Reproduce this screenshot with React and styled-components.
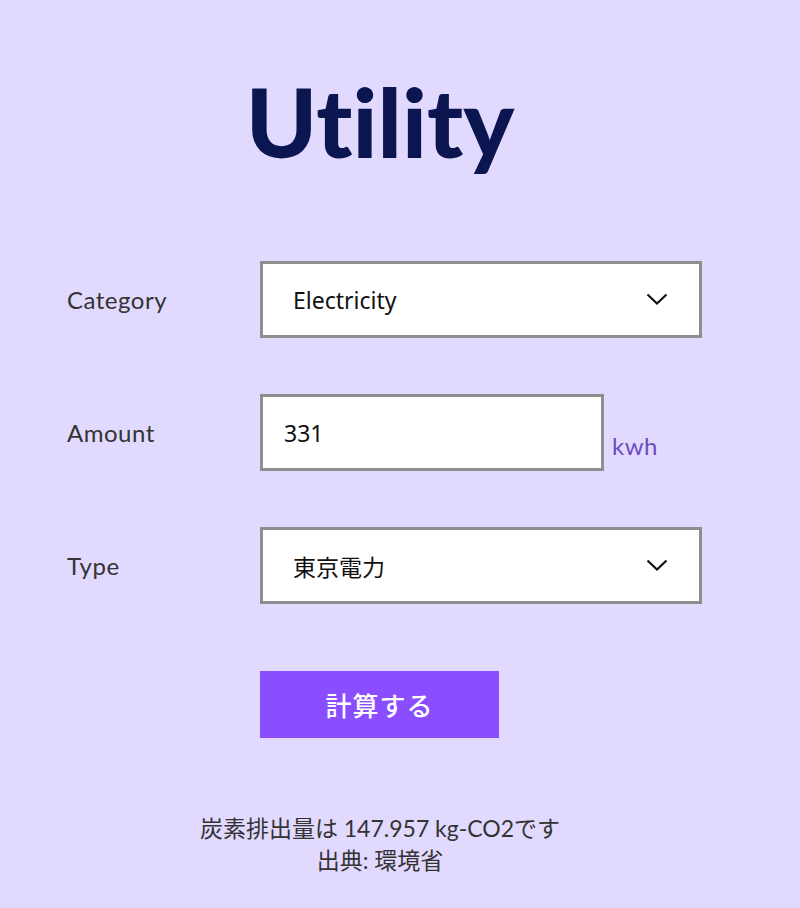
import React from "react";
import styled, { createGlobalStyle } from "styled-components";

const Global = createGlobalStyle`
  html, body { margin: 0; padding: 0; background: #e2d9fe; }
  body { font-family: Lato, "Noto Sans CJK JP", sans-serif; }
`;

const Page = styled.div`
  width: 760px;
  min-height: 908px;
  box-sizing: border-box;
  padding-top: 59px;
`;

const Title = styled.h1`
  margin: 0;
  text-align: center;
  font-family: Lato, sans-serif;
  font-weight: 900;
  font-size: 96px;
  line-height: 124px;
  color: #0b1550;
  letter-spacing: 0px;
  font-variant-ligatures: none;
  font-feature-settings: "liga" 0, "dlig" 0;
`;

const Form = styled.div`
  margin-top: 78px;
  padding-left: 67px;
  display: flex;
  flex-direction: column;
  gap: 56px;
`;

const Row = styled.div`
  display: grid;
  grid-template-columns: 193px auto;
  align-items: center;
`;

const Label = styled.div`
  font-family: Lato, sans-serif;
  font-size: 24px;
  letter-spacing: 0.5px;
  color: #333;
`;

const FieldWrap = styled.div`
  display: flex;
  align-items: flex-end;
  gap: 8px;
`;

const Box = styled.div`
  box-sizing: border-box;
  width: ${(p) => p.$w}px;
  height: 77px;
  border: 3px solid #8e8e8e;
  background: #fff;
  display: flex;
  align-items: center;
  justify-content: space-between;
  padding: 0 31px 0 ${(p) => p.$pl}px;
  font-family: "Noto Sans", "Noto Sans CJK JP", sans-serif;
  font-size: 23px;
  color: #111;
`;

const Unit = styled.span`
  font-family: Lato, sans-serif;
  font-size: 24px;
  letter-spacing: 0.5px;
  color: #6a4bc0;
  margin-bottom: 11px;
`;

const Chevron = () => (
  <svg width="22" height="13" viewBox="0 0 22 13">
    <polyline points="1.5,1.5 11,10.5 20.5,1.5" fill="none" stroke="#111" strokeWidth="2.2" />
  </svg>
);

const ButtonRow = styled.div`
  margin-top: 67px;
  padding-left: 260px;
`;

const Button = styled.button`
  width: 239px;
  height: 67px;
  border: none;
  background: #8a4dff;
  color: #fff;
  font-family: "Noto Sans CJK JP", sans-serif;
  font-size: 26px;
  font-weight: 500;
  cursor: pointer;
  letter-spacing: 1px;
`;

const Result = styled.div`
  margin-top: 74px;
  text-align: center;
  font-family: Lato, "Noto Sans CJK JP", sans-serif;
  font-size: 23px;
  line-height: 32px;
  color: #333;
`;

export default function App() {
  return (
    <>
      <Global />
      <Page>
        <Title>Utility</Title>
        <Form>
          <Row>
            <Label>Category</Label>
            <Box $w={442} $pl={30}>
              <span>Electricity</span>
              <Chevron />
            </Box>
          </Row>
          <Row>
            <Label>Amount</Label>
            <FieldWrap>
              <Box $w={344} $pl={21}>
                <span>331</span>
              </Box>
              <Unit>kwh</Unit>
            </FieldWrap>
          </Row>
          <Row>
            <Label>Type</Label>
            <Box $w={442} $pl={30}>
              <span>東京電力</span>
              <Chevron />
            </Box>
          </Row>
        </Form>
        <ButtonRow>
          <Button>計算する</Button>
        </ButtonRow>
        <Result>
          炭素排出量は 147.957 kg-CO2です
          <br />
          出典: 環境省
        </Result>
      </Page>
    </>
  );
}
